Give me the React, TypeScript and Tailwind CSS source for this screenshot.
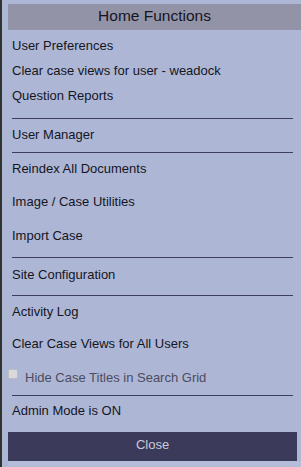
import React from "react";

const font = { fontFamily: '"Liberation Sans", Arial, sans-serif' };

function Item({ h, children }: { h: string; children: React.ReactNode }) {
  return <div className={`${h} flex items-center pl-[4px] text-[13px] text-[#15151f]`}>{children}</div>;
}

function Line({ mt }: { mt: string }) {
  return <div className={`${mt} ml-[4px] mr-[8px] h-px bg-[#3d3d5f]`} />;
}

export default function App() {
  return (
    <div className="flex w-[301px] h-[467px] bg-[#2f3330] overflow-hidden" style={font}>
      <div className="w-[2px] shrink-0 bg-[#303530]" />
      <div className="flex-1 flex flex-col bg-[#adb7d5] pt-[4px] pl-[6px]">
        <div className="h-[26px] shrink-0 flex items-center justify-center pb-[3px] bg-[#9393a8] text-[15.5px] text-[#15151f]">
          Home Functions
        </div>
        <div className="h-[3px]" />
        <Item h="h-[25px]">User Preferences</Item>
        <Item h="h-[25px]">Clear case views for user - weadock</Item>
        <Item h="h-[26px]">Question Reports</Item>
        <Line mt="mt-[9px]" />
        <Item h="h-[31px]">User Manager</Item>
        <Line mt="mt-[2px]" />
        <Item h="h-[32px]">Reindex All Documents</Item>
        <Item h="h-[34px]">Image / Case Utilities</Item>
        <Item h="h-[33px]">Import Case</Item>
        <Line mt="mt-[5px]" />
        <Item h="h-[33px]">Site Configuration</Item>
        <Line mt="mt-[4px]" />
        <Item h="h-[31px]">Activity Log</Item>
        <Item h="h-[34px]">Clear Case Views for All Users</Item>
        <div className="h-[33px] flex items-center text-[13px] text-[#4c4c60]">
          <span className="self-start mt-[8px] w-[10px] h-[10px] shrink-0 rounded-[2px] border border-[#bdbdc4] bg-[#d9d9dc]" />
          <span className="ml-[7px]">Hide Case Titles in Search Grid</span>
        </div>
        <Line mt="mt-[1px]" />
        <Item h="h-[30px]">Admin Mode is ON</Item>
        <div className="mt-[6px] mr-[4px] h-[29px] flex items-center justify-center pb-[4px] bg-[#3b3a5b] text-[13px] text-[#c9cad8]">
          Close
        </div>
        <div className="flex-1 bg-[#b4bcd8]" />
      </div>
    </div>
  );
}
